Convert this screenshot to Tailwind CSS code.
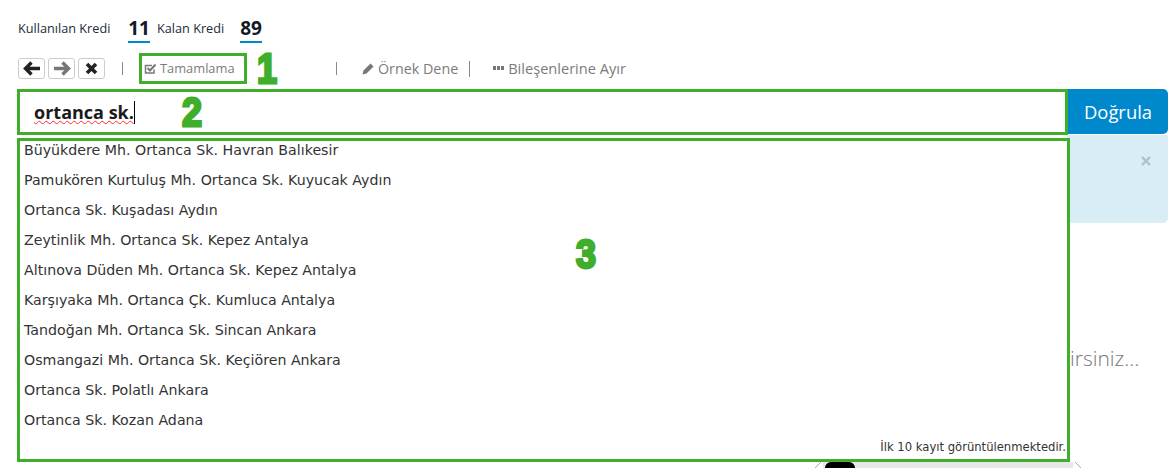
<!DOCTYPE html>
<html lang="en">

<head>
    <meta charset="UTF-8">
    <title>Adres Doğrulama</title>
    <script src="https://cdn.jsdelivr.net/npm/@tailwindcss/browser@4"></script>
</head>

<body class="bg-white overflow-hidden font-['Open_Sans',sans-serif]">
    <div class="w-[1174px] h-[468px] overflow-hidden pl-[18px] pr-[6px] relative">
        <!-- credits -->
        <div class="flex items-start h-[44px] pt-[17px] text-[#222b3a]">
            <span class="text-[12.7px] leading-[22px] w-[110px]">Kullanılan Kredi</span>
            <span class="text-[19px] leading-[22px] font-bold w-[22px] h-[26px] text-center border-b-2 border-[#0088cc] text-[#111827]">11</span>
            <span class="text-[12.7px] leading-[22px] ml-[7px] w-[83px]">Kalan Kredi</span>
            <span class="text-[19px] leading-[22px] font-bold w-[22px] h-[26px] text-center border-b-2 border-[#0088cc] text-[#111827]">89</span>
        </div>

        <!-- toolbar -->
        <div class="flex items-center h-[45px] pt-[4px] text-[#7b7b7b]">
            <div class="flex gap-[3px]">
                <button class="w-[27px] h-[21px] border border-[#ccc] rounded-[3px] flex items-center justify-center">
                    <svg width="18" height="15" viewBox="0 0 18 15"><path d="M8.5 1.5 2.5 7.5l6 6M3 7.5h14" fill="none" stroke="#222" stroke-width="3.4"/></svg>
                </button>
                <button class="w-[27px] h-[21px] border border-[#ccc] rounded-[3px] flex items-center justify-center">
                    <svg width="18" height="15" viewBox="0 0 18 15"><path d="M9.5 1.5l6 6-6 6M15 7.5H1" fill="none" stroke="#777" stroke-width="3.4"/></svg>
                </button>
                <button class="w-[27px] h-[21px] border border-[#ccc] rounded-[3px] flex items-center justify-center">
                    <svg width="13" height="13" viewBox="0 0 13 13"><path d="M2 2l9 9M11 2l-9 9" fill="none" stroke="#222" stroke-width="3.6"/></svg>
                </button>
            </div>
            <span class="ml-[17px] w-px h-[13px] bg-[#7f8c9a]"></span>
            <div class="ml-[16px] w-[108px] h-[31px] border-[3px] border-[#3fae2a] flex items-center pl-[2px] gap-[3px] text-[12.85px]">
                <svg width="13" height="12" viewBox="0 0 13 12"><path d="M10 6.5V10H1.5V2.5H8" fill="none" stroke="#777" stroke-width="1.5"/><path d="M3.5 5 6 7.5 11.5 1.5" fill="none" stroke="#777" stroke-width="2"/></svg>
                <span>Tamamlama</span>
            </div>
            <span class="ml-[10px] w-[80px] text-[#3fae2a] font-['Liberation_Sans',sans-serif] font-bold text-[36px] leading-none scale-y-[1.2] [-webkit-text-stroke:2.5px_#3fae2a]">1</span>
            <span class="-ml-[1px] w-px h-[13px] bg-[#7f8c9a]"></span>
            <div class="ml-[25px] flex items-center gap-[3px] text-[14.3px]">
                <svg width="13" height="13" viewBox="0 0 13 13"><path d="M0.5 12.5l1-4 7-7 3 3-7 7z" fill="#777"/></svg>
                <span>Örnek Dene</span>
            </div>
            <span class="ml-[11px] w-px h-[16px] bg-[#7f8c9a]"></span>
            <div class="ml-[23px] flex items-center gap-[4px] text-[14.6px]">
                <svg width="11" height="4" viewBox="0 0 11 4"><path d="M0 0h3v4H0zM4 0h3v4H4zM8 0h3v4H8z" fill="#777"/></svg>
                <span>Bileşenlerine Ayır</span>
            </div>
        </div>

        <!-- input row -->
        <div class="flex -ml-[1px] h-[46px]">
            <div class="w-[1051px] border-[3px] border-[#3fae2a] flex items-center pl-[14px]">
                <span class="text-[18px] font-bold text-[#1a1a1a] underline decoration-wavy decoration-red-500 decoration-1">ortanca sk.</span>
                <span class="w-px h-[23px] bg-black"></span>
                <span class="ml-[47px] text-[#3fae2a] font-['Liberation_Sans',sans-serif] font-bold text-[36px] leading-none scale-y-[1.15] [-webkit-text-stroke:2.5px_#3fae2a]">2</span>
            </div>
            <button class="w-[100px] h-[45px] bg-[#0088cc] rounded-r-[5px] text-white text-[18.4px]">Doğrula</button>
        </div>

        <!-- suggestions + side -->
        <div class="flex -ml-[1px] items-start">
            <div class="w-[1053px] h-[324px] mt-[3px] border-[3px] border-[#3fae2a] pl-[4px] relative z-10 font-['DejaVu_Sans',sans-serif] text-[14.2px] text-[#333]">
                <ul>
                    <li class="h-[30px] leading-[18px]">Büyükdere Mh. Ortanca Sk. Havran Balıkesir</li>
                    <li class="h-[30px] leading-[18px]">Pamukören Kurtuluş Mh. Ortanca Sk. Kuyucak Aydın</li>
                    <li class="h-[30px] leading-[18px]">Ortanca Sk. Kuşadası Aydın</li>
                    <li class="h-[30px] leading-[18px]">Zeytinlik Mh. Ortanca Sk. Kepez Antalya</li>
                    <li class="h-[30px] leading-[18px]">Altınova Düden Mh. Ortanca Sk. Kepez Antalya</li>
                    <li class="h-[30px] leading-[18px]">Karşıyaka Mh. Ortanca Çk. Kumluca Antalya</li>
                    <li class="h-[30px] leading-[18px]">Tandoğan Mh. Ortanca Sk. Sincan Ankara</li>
                    <li class="h-[30px] leading-[18px]">Osmangazi Mh. Ortanca Sk. Keçiören Ankara</li>
                    <li class="h-[30px] leading-[18px]">Ortanca Sk. Polatlı Ankara</li>
                    <li class="h-[30px] leading-[18px]">Ortanca Sk. Kozan Adana</li>
                </ul>
                <span class="absolute right-[1px] bottom-[5px] text-[11.6px] leading-[14px]">İlk 10 kayıt görüntülenmektedir.</span>
                <span class="absolute left-[556px] top-[95px] text-[#3fae2a] font-['Liberation_Sans',sans-serif] font-bold text-[36px] leading-none scale-y-[1.15] [-webkit-text-stroke:2.5px_#3fae2a]">3</span>
            </div>
            <div class="flex-1 -ml-[3px]">
                <div class="h-[88px] bg-[#d9edf7] rounded-b-[5px] flex justify-end pr-[17px] pt-[21px]">
                    <svg width="10" height="10" viewBox="0 0 10 10"><path d="M1 1l8 8M9 1l-8 8" fill="none" stroke="#b4bec5" stroke-width="2.4"/></svg>
                </div>
                <p class="mt-[122px] pl-[3px] text-[21px] leading-[26px] font-light text-[#777]">irsiniz...</p>
            </div>
        </div>

        <!-- picture edge below the list -->
        <div class="absolute left-[815px] top-[462px] w-[266px] h-[6px]">
            <svg class="absolute inset-0" width="266" height="6" viewBox="0 0 266 6"><path d="M6 0 0 6M260 0l6 6" fill="none" stroke="#aaa"/></svg>
            <div class="ml-[8px] w-[250px] h-[6px] bg-[#e8e8e8]">
                <div class="ml-[2px] w-[30px] h-[6px] bg-black rounded-t-full"></div>
            </div>
        </div>
    </div>
</body>

</html>
